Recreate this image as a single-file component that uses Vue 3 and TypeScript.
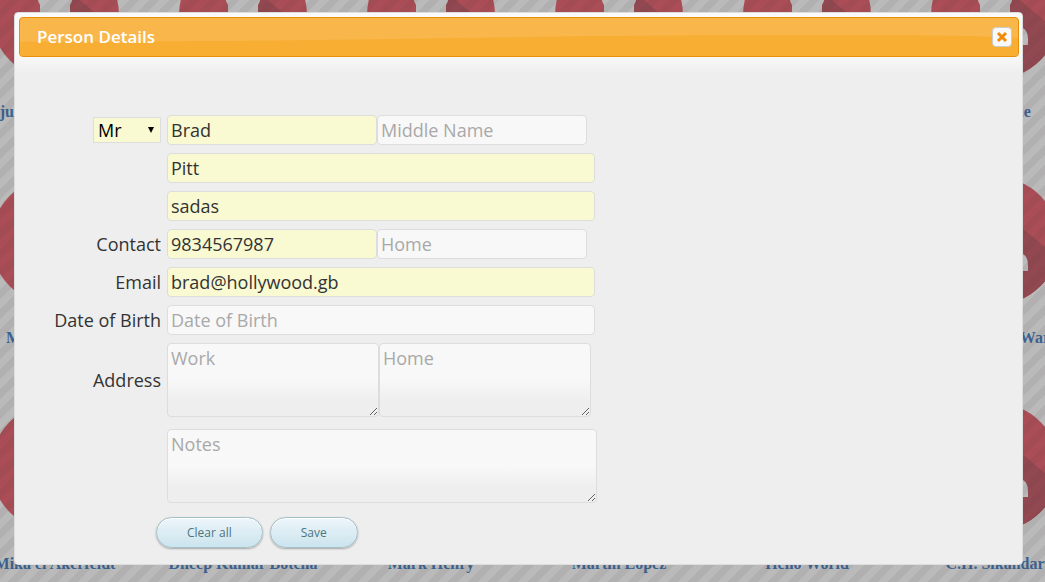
<script setup lang="ts">
import { reactive, ref } from 'vue'

interface Person {
  title: string
  first: string
  middle: string
  last: string
  alias: string
  mobile: string
  home: string
  email: string
  birth: string
  workAddress: string
  homeAddress: string
  notes: string
}

const people: string[] = [
  'Arjun Ramakrishnan', '', '', '', '', 'Jo Malone',
  'Michael Ward', '', '', '', '', 'Christopher J. Warner',
  'Mika el Akerfeldt', 'Dheep Kumar Botcha', 'Mark Henry', 'Martin Lopez', 'Hello World', 'C.H. Sikandar',
]

const open = ref(true)
const person = reactive<Person>({
  title: 'Mr',
  first: 'Brad',
  middle: '',
  last: 'Pitt',
  alias: 'sadas',
  mobile: '9834567987',
  home: '',
  email: 'brad@hollywood.gb',
  birth: '',
  workAddress: '',
  homeAddress: '',
  notes: '',
})

function clearAll(): void {
  for (const key of Object.keys(person) as (keyof Person)[]) {
    person[key] = key === 'title' ? 'Mr' : ''
  }
}

function save(): void {
  open.value = false
}
</script>

<template>
  <div class="page">
    <div class="backdrop" aria-hidden="true">
      <div class="people">
        <div v-for="(name, i) in people" :key="i" class="card">
          <svg class="avatar" viewBox="-64 -64 128 128">
            <defs>
              <clipPath :id="`disc-${i}`"><circle r="64" /></clipPath>
            </defs>
            <g :clip-path="`url(#disc-${i})`">
              <rect x="-64" y="-64" width="128" height="128" fill="#aa4d56" />
              <path d="M14-24L90 40V90H-20L-33 30Z" fill="#924850" />
              <path d="M-15-24Q-15-44 0-44Q15-44 15-24L17-14Q16-12 15-10V2L28 13Q33 16 33 24V30H-33V24Q-33 16-28 13L-15 2V-10Q-16-12-17-14Z" fill="#bababa" />
            </g>
          </svg>
          <span class="name">{{ name }}</span>
        </div>
      </div>
      <div class="stripes"></div>
    </div>

    <section v-if="open" class="dialog" role="dialog" aria-labelledby="dialog-title">
      <header class="titlebar">
        <svg class="shine" viewBox="0 0 1000 40" preserveAspectRatio="none" aria-hidden="true">
          <path d="M0 25Q220 25 440 21T850 18Q940 18 1000 21V40H0Z" fill="#f7ae33" />
        </svg>
        <h1 id="dialog-title">Person Details</h1>
        <button class="close" type="button" aria-label="Close" @click="open = false">
          <svg viewBox="0 0 12 12" width="12" height="12" aria-hidden="true">
            <path d="M2 2L10 10M10 2L2 10" stroke="#ef8c08" stroke-width="3" />
          </svg>
        </button>
      </header>

      <form class="form" @submit.prevent="save">
        <div class="row">
          <div class="label">
            <span class="select-box">
              <select v-model="person.title" aria-label="Title">
                <option>Mr</option>
                <option>Mrs</option>
                <option>Ms</option>
              </select>
              <svg class="arrow" viewBox="0 0 6 6" width="6" height="6" aria-hidden="true">
                <path d="M0 0H6L3 6Z" />
              </svg>
            </span>
          </div>
          <input v-model="person.first" class="half" :class="{ filled: person.first }" type="text" placeholder="First Name" aria-label="First Name">
          <input v-model="person.middle" class="half" :class="{ filled: person.middle }" type="text" placeholder="Middle Name" aria-label="Middle Name">
        </div>
        <div class="row">
          <div class="label"></div>
          <input v-model="person.last" class="full" :class="{ filled: person.last }" type="text" placeholder="Last Name" aria-label="Last Name">
        </div>
        <div class="row">
          <div class="label"></div>
          <input v-model="person.alias" class="full" :class="{ filled: person.alias }" type="text" placeholder="Alias" aria-label="Alias">
        </div>
        <div class="row">
          <label class="label" for="mobile">Contact</label>
          <input id="mobile" v-model="person.mobile" class="half" :class="{ filled: person.mobile }" type="text" placeholder="Mobile">
          <input v-model="person.home" class="half" :class="{ filled: person.home }" type="text" placeholder="Home" aria-label="Home phone">
        </div>
        <div class="row">
          <label class="label" for="email">Email</label>
          <input id="email" v-model="person.email" class="full" :class="{ filled: person.email }" type="text" placeholder="Email">
        </div>
        <div class="row">
          <label class="label" for="birth">Date of Birth</label>
          <input id="birth" v-model="person.birth" class="full" :class="{ filled: person.birth }" type="text" placeholder="Date of Birth">
        </div>
        <div class="row">
          <label class="label" for="work">Address</label>
          <textarea id="work" v-model="person.workAddress" class="area" placeholder="Work"></textarea>
          <textarea v-model="person.homeAddress" class="area" placeholder="Home" aria-label="Home address"></textarea>
        </div>
        <div class="row notes">
          <div class="label"></div>
          <textarea v-model="person.notes" class="area wide" placeholder="Notes" aria-label="Notes"></textarea>
        </div>
        <div class="actions">
          <button class="pill" type="button" @click="clearAll">Clear all</button>
          <button class="pill" type="submit">Save</button>
        </div>
      </form>
    </section>
  </div>
</template>

<style>
body {
  margin: 0;
  overflow: hidden;
}
</style>

<style scoped>
* {
  box-sizing: border-box;
}

.page {
  position: relative;
  min-height: 100vh;
  padding: 12px 22px 16px 14px;
  font-family: "Trebuchet MS", "Open Sans", "Noto Sans", sans-serif;
  font-size: 18px;
  color: #333;
}

.backdrop {
  position: absolute;
  inset: 0;
  overflow: hidden;
  background: #bababa;
}

.people {
  display: grid;
  grid-template-columns: repeat(6, 188px);
  grid-auto-rows: 226px;
  margin: -49px 0 0 -39px;
}

.card {
  display: flex;
  flex-direction: column;
  align-items: center;
  gap: 23px;
}

.avatar {
  width: 128px;
  height: 128px;
}

.name {
  font: bold 16px/20px "Liberation Serif", serif;
  color: #3a6290;
  white-space: nowrap;
}

.stripes {
  position: absolute;
  inset: 0;
  background: linear-gradient(135deg, transparent 25%, rgba(80, 60, 60, 0.08) 25% 50%, transparent 50% 75%, rgba(80, 60, 60, 0.08) 75%) 0 0 / 20px 20px;
}

.dialog {
  position: relative;
  padding: 4px 3px 16px 4px;
  border: 1px solid #ddd;
  border-radius: 4px;
  background: linear-gradient(#fafafa 40px, #eee 60px);
}

.titlebar {
  position: relative;
  display: flex;
  align-items: center;
  justify-content: space-between;
  height: 40px;
  padding: 0 6px 0 17px;
  overflow: hidden;
  border: 1px solid #e78f08;
  border-radius: 4px;
  background: #f8b64b;
}

.shine {
  position: absolute;
  inset: 0;
  width: 100%;
  height: 100%;
}

h1 {
  position: relative;
  margin: 0;
  font-size: 17px;
  line-height: 24px;
  font-weight: 600;
  color: #fff;
}

.close {
  position: relative;
  display: grid;
  place-items: center;
  width: 20px;
  height: 20px;
  padding: 0;
  border: 1px solid #ccc;
  border-radius: 4px;
  background: #f9f9f9;
}

.form {
  display: flex;
  flex-direction: column;
  gap: 8px;
  padding: 58px 0 0 20px;
}

.row {
  display: flex;
  align-items: center;
}

.label {
  flex: none;
  width: 122px;
  margin-right: 6px;
  line-height: 24px;
  text-align: right;
}

input,
textarea,
select {
  margin: 0;
  border: 1px solid #ddd;
  font: inherit;
  color: #333;
}

input {
  height: 30px;
  padding: 0 3px;
  border-radius: 4px;
  background: #f8f8f8;
}

.half {
  width: 210px;
}

.full {
  width: 428px;
}

.filled {
  background: #f9f9d2;
}

::placeholder {
  color: #a9a9a9;
  font-weight: 500;
  opacity: 1;
}

.select-box {
  position: relative;
  display: block;
  width: 68px;
  height: 26px;
  margin-left: auto;
}

select {
  width: 100%;
  height: 26px;
  padding: 0 4px;
  appearance: none;
  border-radius: 0;
  background: #f9f9d2;
  color: #000;
}

.arrow {
  position: absolute;
  top: 10px;
  right: 7px;
  pointer-events: none;
}

.area {
  width: 212px;
  height: 74px;
  padding: 2px 3px;
  border-radius: 4px;
  background: linear-gradient(#f8f8f8 50%, #eee 80%);
  line-height: 24px;
}

.wide {
  width: 430px;
}

.notes {
  margin-top: 4px;
}

.actions {
  display: flex;
  gap: 7px;
  margin: 6px 0 0 117px;
}

.pill {
  height: 31px;
  padding: 0 30px;
  border: 1px solid #a5bfc6;
  border-radius: 16px;
  background: linear-gradient(#edf5fa, #cbe4ee);
  box-shadow: 0 1px 2px rgba(0, 0, 0, 0.3), inset 0 1px 1px #fff;
  font: 500 12px/16px "Trebuchet MS", "Open Sans", sans-serif;
  color: #4e757d;
}
</style>
